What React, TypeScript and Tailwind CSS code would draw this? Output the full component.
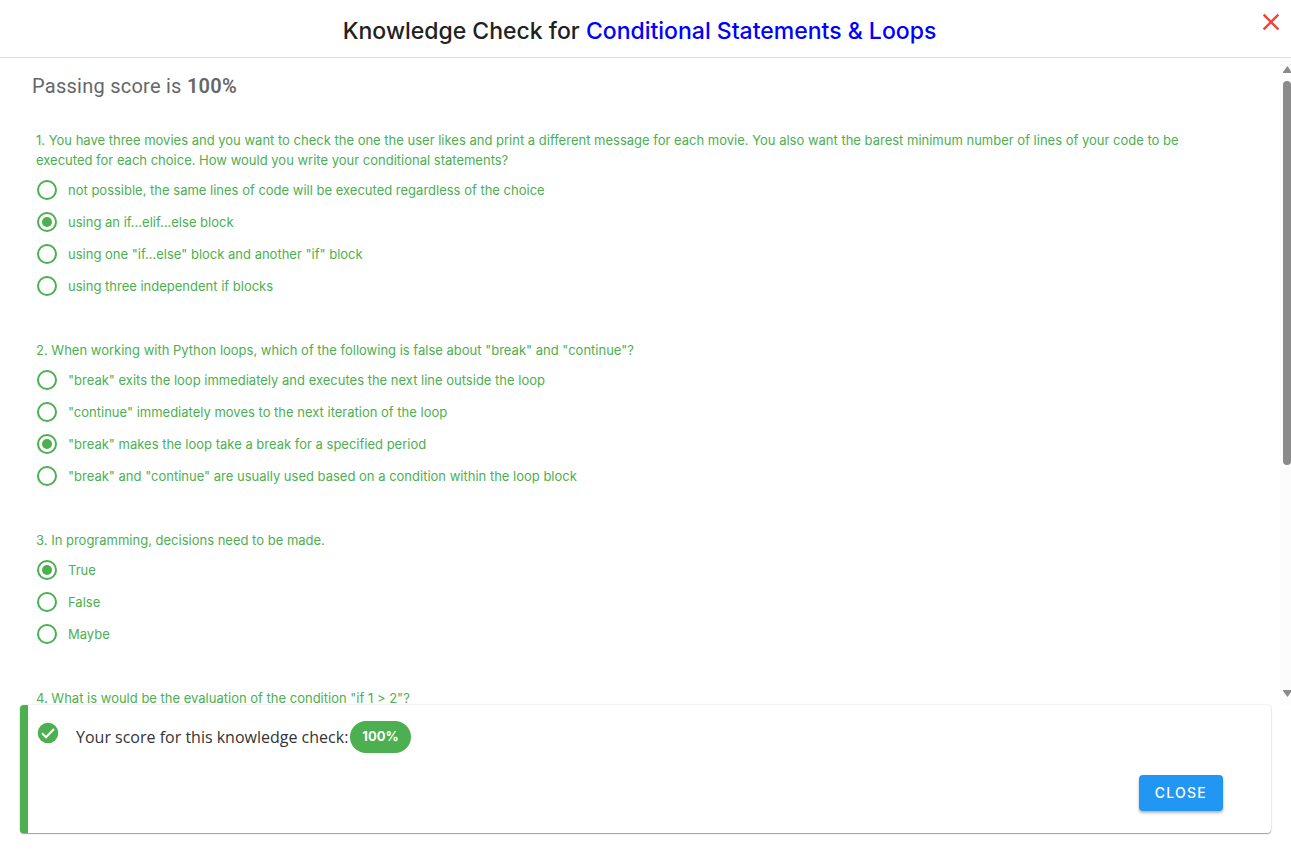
import { useState } from "react";

type Question = { text: string; options: string[]; answer: number };

const questions: Question[] = [
  {
    text: "You have three movies and you want to check the one the user likes and print a different message for each movie. You also want the barest minimum number of lines of your code to be executed for each choice. How would you write your conditional statements?",
    options: [
      "not possible, the same lines of code will be executed regardless of the choice",
      "using an if...elif...else block",
      'using one "if...else" block and another "if" block',
      "using three independent if blocks",
    ],
    answer: 1,
  },
  {
    text: 'When working with Python loops, which of the following is false about "break" and "continue"?',
    options: [
      '"break" exits the loop immediately and executes the next line outside the loop',
      '"continue" immediately moves to the next iteration of the loop',
      '"break" makes the loop take a break for a specified period',
      '"break" and "continue" are usually used based on a condition within the loop block',
    ],
    answer: 2,
  },
  {
    text: "In programming, decisions need to be made.",
    options: ["True", "False", "Maybe"],
    answer: 0,
  },
  {
    text: 'What is would be the evaluation of the condition "if 1 > 2"?',
    options: [],
    answer: 0,
  },
];

function QuestionBlock({ question, index }: { question: Question; index: number }) {
  const [selected, setSelected] = useState(question.answer);
  return (
    <fieldset>
      <legend className="mb-1">
        {`${index + 1}. ${question.text}`}
      </legend>
      {question.options.map((option, i) => (
        <label key={option} className="flex h-8 items-center gap-[11px] pl-px">
          <input
            type="radio"
            name={`question-${index}`}
            checked={selected === i}
            onChange={() => setSelected(i)}
            className="flex size-5 shrink-0 appearance-none items-center justify-center rounded-full border-2 border-[#4caf50] before:size-2.5 before:rounded-full checked:before:bg-[#4caf50]"
          />
          {option}
        </label>
      ))}
    </fieldset>
  );
}

function ScrollRail() {
  return (
    <div aria-hidden="true" className="flex w-[11px] shrink-0 flex-col items-end bg-[#fcfcfc] py-2">
      <svg viewBox="0 0 8 7" className="h-[7px] w-2 fill-[#8b8b8b]">
        <path d="M4.5 0 8 5.500V7H0V6Z" />
      </svg>
      <div className="mt-2 flex w-2 flex-1 flex-col">
        <div className="h-[63%] rounded-full bg-[#8b8b8b]" />
      </div>
      <svg viewBox="0 0 8 7" className="h-[7px] w-2 fill-[#8b8b8b]">
        <path d="M0 0H8V2L4.500 7 0 1Z" />
      </svg>
    </div>
  );
}

export default function App() {
  return (
    <div className="flex h-screen flex-col bg-white font-[Inter,'Open_Sans',sans-serif] text-[#212121]">
      <header className="relative flex h-[58px] shrink-0 items-center justify-center border-b border-[#dedede] pt-1 pr-3">
        <h1 className="text-[23px] leading-8 font-medium">
          Knowledge Check for <span className="text-[#0000ff]">Conditional Statements &amp; Loops</span>
        </h1>
        <button type="button" aria-label="Dismiss" className="absolute top-2 right-1.5">
          <svg viewBox="0 0 24 24" className="size-7 fill-[#f44336]">
            <path d="M19 6.410 17.590 5 12 10.590 6.410 5 5 6.410 10.590 12 5 17.590 6.410 19 12 13.410 17.590 19 19 17.590 13.410 12Z" />
          </svg>
        </button>
      </header>

      <main className="flex min-h-0 flex-1">
        <div className="min-w-0 flex-1 overflow-y-auto pt-3 pr-16 pl-8 [scrollbar-width:none]">
          <p className="font-[Roboto,sans-serif] text-[20px] leading-8 tracking-[0.25px] text-[#666666]">
            Passing score is <strong className="font-semibold">100%</strong>
          </p>
          <form className="mt-7 flex flex-col gap-[38px] pl-1 text-[13px] leading-5 text-[#4caf50]">
            {questions.map((question, i) => (
              <QuestionBlock key={question.text} question={question} index={i} />
            ))}
          </form>
        </div>
        <ScrollRail />
      </main>

      <section className="mx-5 mb-[22px] flex shrink-0 rounded border-l-8 border-[#4caf50] bg-white pt-4 pr-12 pb-[22px] pl-2 shadow-[0_1px_1px_rgba(0,0,0,0.35),0_0_2px_rgba(0,0,0,0.18)]">
        <svg viewBox="0 0 24 24" className="size-6 shrink-0">
          <circle cx="12" cy="12" r="10.300" fill="#4caf50" />
          <path d="m6 12.300 4 4 8-8.300" fill="none" stroke="#fff" strokeWidth="2" />
        </svg>
        <div className="ml-4 flex flex-1 flex-col gap-[22px]">
          <p className="flex items-center gap-0.5 text-base text-[#333333]">
            <span className="font-['Open_Sans',sans-serif]">Your score for this knowledge check:</span>
            <span className="flex h-8 items-center rounded-full bg-[#4caf50] px-3 text-[13px] font-bold text-white">100%</span>
          </p>
          <button
            type="button"
            className="h-9 self-end rounded bg-[#2196f3] px-4 text-sm font-medium tracking-[1.25px] text-white uppercase shadow-[0_2px_3px_rgba(0,0,0,0.3)]"
          >
            Close
          </button>
        </div>
      </section>
    </div>
  );
}
